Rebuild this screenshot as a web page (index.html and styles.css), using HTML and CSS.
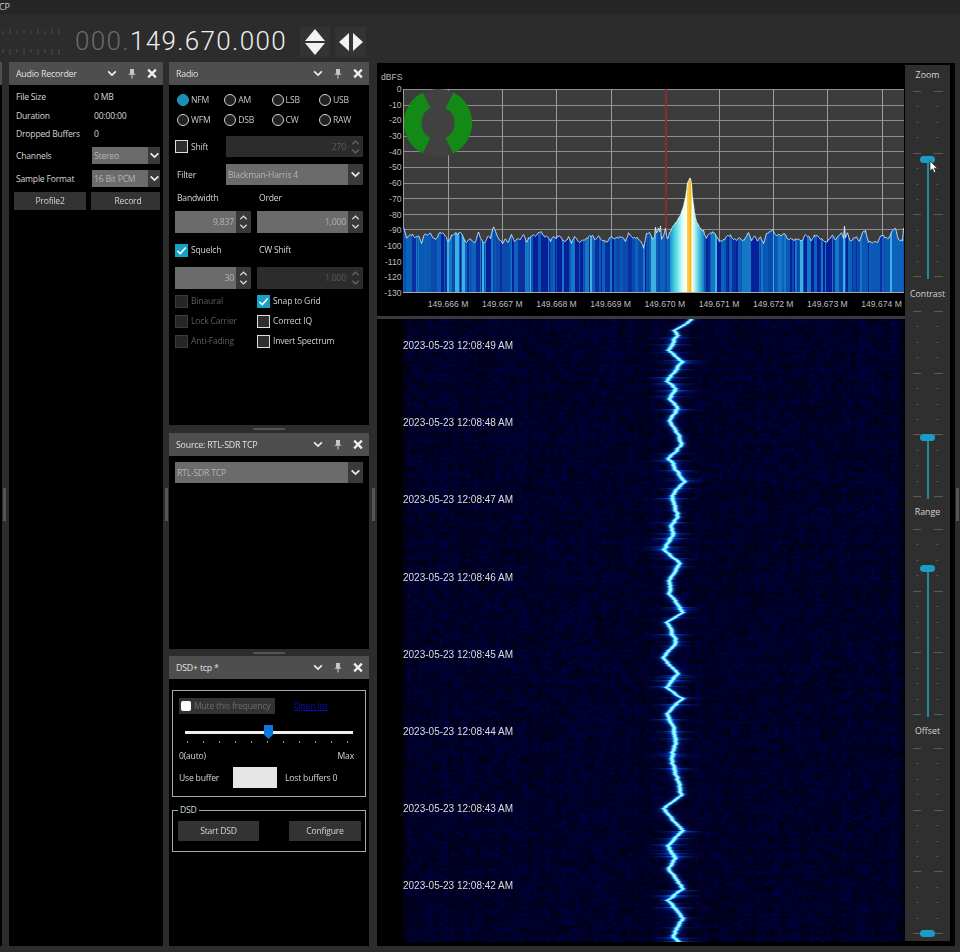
FILE: index.html
```html
<!DOCTYPE html>
<html lang="en">
<head>
<meta charset="utf-8">
<title>SDR</title>
<link rel="stylesheet" href="styles.css">
</head>
<body>
<svg class="defs" width="0" height="0" aria-hidden="true">
  <symbol id="i-chev" viewBox="0 0 10 10"><path d="M1.5 3 L5 6.5 L8.5 3" fill="none" stroke="currentColor" stroke-width="1.5"/></symbol>
  <symbol id="i-pin" viewBox="0 0 10 10"><path d="M3.2 0.8 H6.8 V5.2 H8 V6.2 H5.5 V9.6 H4.5 V6.2 H2 V5.2 H3.2 Z" fill="currentColor" fill-opacity=".75"/></symbol>
  <symbol id="i-x" viewBox="0 0 10 10"><path d="M1.5 1.5 L8.5 8.5 M8.5 1.5 L1.5 8.5" fill="none" stroke="currentColor" stroke-width="2"/></symbol>
  <symbol id="i-up" viewBox="0 0 10 10"><path d="M1.5 7 L5 3.5 L8.5 7" fill="none" stroke="currentColor" stroke-width="1.4"/></symbol>
  <symbol id="i-check" viewBox="0 0 14 14"><path d="M2.5 7.5 L5.7 10.3 L11.5 3.8" fill="none" stroke="#fff" stroke-width="1.7"/></symbol>
</svg>

<div class="app">
  <div class="titlebar">CP</div>
  <div class="toolbar">
    <svg class="meter" width="62" height="30" viewBox="0 0 62 30" aria-hidden="true">
      <path d="M3 3v3M10 1v5M17 3v3M24 1v5M31 3v3M38 1v5M45 3v3M52 1v5M59 1v5M3 21v4M10 21v6M17 21v4M24 21v6M31 21v4M38 21v6M45 21v4M52 21v6M59 21v6" stroke="#4c4c4c" stroke-width="1"/>
    </svg>
    <div class="tuner"><span class="dim">000.</span>149.670.000</div>
    <div class="tunebtn tunebtn-v">
      <svg width="24" height="28" viewBox="0 0 24 28" aria-hidden="true"><path d="M12 1 L22 13 H2 Z M12 27 L2 15 H22 Z" fill="#f2f2f2"/></svg>
    </div>
    <div class="tunebtn tunebtn-h">
      <svg width="28" height="20" viewBox="0 0 28 20" aria-hidden="true"><path d="M12 1 V19 L2 10 Z M16 1 V19 L26 10 Z" fill="#f2f2f2"/></svg>
    </div>
  </div>

  <div class="workspace">
    <div class="gutter gutter-edge"><span class="vhandle"></span></div>

    <section class="panel audio">
      <header class="phead"><span class="ptitle">Audio Recorder</span><span class="picons"><svg><use href="#i-chev"/></svg><svg><use href="#i-pin"/></svg><svg><use href="#i-x"/></svg></span></header>
      <div class="audio-body">
        <div class="arow"><span class="alabel">File Size</span><span class="aval">0 MB</span></div>
        <div class="arow"><span class="alabel">Duration</span><span class="aval">00:00:00</span></div>
        <div class="arow"><span class="alabel">Dropped Buffers</span><span class="aval">0</span></div>
        <div class="arow arow-c1"><span class="alabel">Channels</span><div class="combo combo-sm"><span class="combo-t">Stereo</span><span class="combo-a"><svg><use href="#i-chev"/></svg></span></div></div>
        <div class="arow arow-c2"><span class="alabel">Sample Format</span><div class="combo combo-sm"><span class="combo-t">16 Bit PCM</span><span class="combo-a"><svg><use href="#i-chev"/></svg></span></div></div>
        <div class="abtns"><button class="btn btn-p">Profile2</button><button class="btn btn-r">Record</button></div>
      </div>
    </section>

    <div class="gutter gutter-a"><span class="vhandle"></span></div>

    <div class="stack">
      <section class="panel radio">
        <header class="phead"><span class="ptitle">Radio</span><span class="picons"><svg><use href="#i-chev"/></svg><svg><use href="#i-pin"/></svg><svg><use href="#i-x"/></svg></span></header>
        <div class="radio-body">
          <div class="modes">
            <label class="mode"><i class="rb rb-on"></i>NFM</label>
            <label class="mode"><i class="rb"></i>AM</label>
            <label class="mode"><i class="rb"></i>LSB</label>
            <label class="mode"><i class="rb"></i>USB</label>
            <label class="mode"><i class="rb"></i>WFM</label>
            <label class="mode"><i class="rb"></i>DSB</label>
            <label class="mode"><i class="rb"></i>CW</label>
            <label class="mode"><i class="rb"></i>RAW</label>
          </div>
          <div class="frow frow-shift">
            <label class="chk flabel"><i class="cb cb-off"></i>Shift</label>
            <div class="spin spin-off spin-f"><span class="spin-v">270</span><span class="spin-a"><svg><use href="#i-up"/></svg><svg class="flip"><use href="#i-up"/></svg></span></div>
          </div>
          <div class="frow frow-filter">
            <span class="flabel flabel-t">Filter</span>
            <div class="combo combo-f"><span class="combo-t">Blackman-Harris 4</span><span class="combo-a"><svg><use href="#i-chev"/></svg></span></div>
          </div>
          <div class="two two-l1"><span class="tl">Bandwidth</span><span class="tl">Order</span></div>
          <div class="two two-s1">
            <div class="spin"><span class="spin-v">9,837</span><span class="spin-a"><svg><use href="#i-up"/></svg><svg class="flip"><use href="#i-up"/></svg></span></div>
            <div class="spin"><span class="spin-v">1,000</span><span class="spin-a"><svg><use href="#i-up"/></svg><svg class="flip"><use href="#i-up"/></svg></span></div>
          </div>
          <div class="two two-l2">
            <label class="chk"><i class="cb cb-on"><svg><use href="#i-check"/></svg></i>Squelch</label>
            <span class="tl">CW Shift</span>
          </div>
          <div class="two two-s2">
            <div class="spin"><span class="spin-v">30</span><span class="spin-a"><svg><use href="#i-up"/></svg><svg class="flip"><use href="#i-up"/></svg></span></div>
            <div class="spin spin-off"><span class="spin-v">1,000</span><span class="spin-a"><svg><use href="#i-up"/></svg><svg class="flip"><use href="#i-up"/></svg></span></div>
          </div>
          <div class="two two-c">
            <label class="chk chk-dis"><i class="cb cb-dis"></i>Binaural</label>
            <label class="chk"><i class="cb cb-on"><svg><use href="#i-check"/></svg></i>Snap to Grid</label>
            <label class="chk chk-dis"><i class="cb cb-dis"></i>Lock Carrier</label>
            <label class="chk"><i class="cb cb-off"></i>Correct IQ</label>
            <label class="chk chk-dis"><i class="cb cb-dis"></i>Anti-Fading</label>
            <label class="chk"><i class="cb cb-off"></i>Invert Spectrum</label>
          </div>
        </div>
      </section>
      <div class="hsplit hsplit-a"><span class="hhandle"></span></div>
      <section class="panel source">
        <header class="phead"><span class="ptitle">Source: RTL-SDR TCP</span><span class="picons"><svg><use href="#i-chev"/></svg><svg><use href="#i-pin"/></svg><svg><use href="#i-x"/></svg></span></header>
        <div class="source-body">
          <div class="combo combo-f"><span class="combo-t">RTL-SDR TCP</span><span class="combo-a"><svg><use href="#i-chev"/></svg></span></div>
        </div>
      </section>
      <div class="hsplit hsplit-b"><span class="hhandle"></span></div>
      <section class="panel dsd">
        <header class="phead"><span class="ptitle">DSD+ tcp *</span><span class="picons"><svg><use href="#i-chev"/></svg><svg><use href="#i-pin"/></svg><svg><use href="#i-x"/></svg></span></header>
        <div class="dsd-body">
          <div class="box box-net">
            <div class="mute-row">
              <span class="mute"><i class="mute-cb"></i>Mute this frequency</span>
              <a class="openlist" href="#">Open list</a>
            </div>
            <div class="bufslider"><span class="bufthumb"></span></div>
            <div class="bufticks"></div>
            <div class="buflabels"><span>0(auto)</span><span>Max</span></div>
            <div class="bufrow"><span>Use buffer</span><span class="bufbox"></span><span>Lost buffers 0</span></div>
          </div>
          <div class="box box-dsd">
            <span class="legend">DSD</span>
            <div class="dsdbtns"><button class="btn btn-s">Start DSD</button><button class="btn btn-c">Configure</button></div>
          </div>
        </div>
      </section>
    </div>

    <div class="gutter gutter-b"><span class="vhandle"></span></div>

    <main class="main">
      <div class="display">
        <div class="spectrum">
          <div class="dbfs">dBFS</div>
          <div class="plotrow">
            <div class="dbaxis">
              <span>0</span><span>-10</span><span>-20</span><span>-30</span><span>-40</span><span>-50</span><span>-60</span><span>-70</span><span>-80</span><span>-90</span><span>-100</span><span>-110</span><span>-120</span><span>-130</span>
            </div>
            <div class="plot">
              <canvas id="spec" width="501" height="204"></canvas>
              <svg class="donut" width="70" height="70" viewBox="-35 -35 70 70" aria-hidden="true">
                <circle r="34" fill="#414141"/>
                <path d="M15.4 -30.4 A34 34 0 0 1 15.4 30.4 L7.6 15 A17 17 0 0 0 7.6 -15 Z" fill="#138a15"/>
                <path d="M-15.4 -30.4 A34 34 0 0 0 -15.4 30.4 L-7.6 15 A17 17 0 0 1 -7.6 -15 Z" fill="#138a15"/>
              </svg>
            </div>
          </div>
          <div class="freqaxis">
            <span>149.666 M</span><span>149.667 M</span><span>149.668 M</span><span>149.669 M</span><span>149.670 M</span><span>149.671 M</span><span>149.672 M</span><span>149.673 M</span><span>149.674 M</span>
          </div>
        </div>
        <div class="sep"></div>
        <div class="fallrow">
          <div class="fall">
            <canvas id="fall" width="501" height="623"></canvas>
            <div class="stamps">
              <span>2023-05-23 12:08:49 AM</span>
              <span>2023-05-23 12:08:48 AM</span>
              <span>2023-05-23 12:08:47 AM</span>
              <span>2023-05-23 12:08:46 AM</span>
              <span>2023-05-23 12:08:45 AM</span>
              <span>2023-05-23 12:08:44 AM</span>
              <span>2023-05-23 12:08:43 AM</span>
              <span>2023-05-23 12:08:42 AM</span>
            </div>
          </div>
        </div>
      </div>
      <aside class="sliders">
        <div class="sl sl-first"><div class="sl-label">Zoom</div><div class="ticks"><span class="groove" style="--p:68px"></span><span class="thumb" style="--p:68px"></span>
          <svg class="cursor" width="10" height="14" viewBox="0 0 10 14" aria-hidden="true"><path d="M1 1 V11 L3.4 8.8 L5 12.5 L6.8 11.8 L5.2 8.2 H8.4 Z" fill="#fff" stroke="#222" stroke-width=".7"/></svg>
        </div></div>
        <div class="sl"><div class="sl-label">Contrast</div><div class="ticks"><span class="groove" style="--p:127px"></span><span class="thumb" style="--p:127px"></span></div></div>
        <div class="sl"><div class="sl-label">Range</div><div class="ticks"><span class="groove" style="--p:39px"></span><span class="thumb" style="--p:39px"></span></div></div>
        <div class="sl"><div class="sl-label">Offset</div><div class="ticks"><span class="thumb" style="--p:186px"></span></div></div>
      </aside>
    </main>

    <div class="gutter gutter-c"><span class="vhandle"></span></div>
  </div>
</div>
<script src="script.js"></script>
</body>
</html>
```
FILE: styles.css
```css
* { box-sizing: border-box; }
html, body { margin: 0; padding: 0; height: 100%; }
body {
  background: #2c2c2c;
  color: #d6d6d6;
  font-family: "Open Sans", "Noto Sans", sans-serif;
  font-size: 8.6px;
  letter-spacing: -0.2px;
  overflow: hidden;
}
.defs { position: absolute; }
.app { width: 960px; height: 952px; display: flex; flex-direction: column; filter: blur(0.35px); }

.titlebar { height: 14px; line-height: 14px; background: #262626; font-size: 9px; color: #ccc; margin-left: -1px; }
.toolbar { height: 48px; display: flex; align-items: center; background: #2c2c2c; }
.meter { flex: none; margin-top: 10px; }
.tuner {
  margin-left: 13px; margin-top: 6px; width: 218px; font-family: Roboto, "Open Sans", sans-serif; font-weight: 300;
  font-size: 26px; letter-spacing: 1.35px; color: #eee; white-space: nowrap;
}
.tuner .dim { color: #6a6a6a; }
.tunebtn { background: #333; height: 30px; margin-top: 8px; display: flex; align-items: center; justify-content: center; }
.tunebtn-v { width: 30px; margin-left: 7px; }
.tunebtn-h { width: 31px; margin-left: 5px; }

.workspace { height: 884px; display: flex; }
.gutter { flex: none; display: flex; align-items: center; justify-content: center; }
.gutter-edge {
  width: 9px;
  background-image: linear-gradient(#4e4e4e, #4e4e4e), linear-gradient(#000, #000);
  background-size: 2px 23px, 2px 100%;
  background-repeat: no-repeat;
}
.gutter-a { width: 6px; }
.gutter-b { width: 8px; }
.gutter-c { width: 5px; }
.vhandle { width: 3px; height: 33px; background: #555; }

.panel { background: #000; display: flex; flex-direction: column; }
.phead { height: 23px; flex: none; background: #4e4e4e; display: flex; align-items: center; justify-content: space-between; padding-left: 7px; }
.ptitle { color: #e0e0e0; font-size: 8.8px; }
.picons { display: flex; padding-right: 1px; color: #f0f0f0; }
.picons svg { width: 20px; height: 11px; }

.audio { width: 154px; flex: none; }
.audio-body { padding: 3px 3px 0 7px; }
.arow { display: flex; align-items: center; height: 18.5px; }
.alabel { width: 76px; flex: none; }
.aval { padding-left: 2px; }
.arow-c1 { height: 17px; margin-top: 3.5px; }
.arow-c2 { height: 17px; margin-top: 6px; }
.combo { display: flex; background: #6b6b6b; color: #b4b4b4; align-items: stretch; }
.combo-t { flex: 1; display: flex; align-items: center; padding-left: 2px; }
.combo-a { background: #3a3a3a; display: flex; align-items: center; justify-content: center; flex: none; width: 15px; color: #eee; }
.combo-a svg { width: 11px; height: 11px; }
.combo-sm { flex: 1; height: 17px; }
.combo-sm .combo-a { width: 12px; }
.abtns { display: flex; margin: 5px 0 0 -2px; gap: 5px; }
.btn { background: #333; color: #d4d4d4; border: 0; padding: 0; font: inherit; letter-spacing: inherit; height: 18px; }
.btn-p { width: 72px; }
.btn-r { width: 69px; padding-left: 5px; }

.stack { width: 200px; flex: none; display: flex; flex-direction: column; }
.radio { height: 363px; flex: none; }
.source { height: 216px; flex: none; }
.dsd { height: 290px; flex: none; }
.hsplit { display: flex; justify-content: center; align-items: center; flex: none; }
.hsplit-a { height: 8px; }
.hsplit-b { height: 7px; }
.hhandle { width: 32px; height: 2px; background: #555; }

.radio-body { padding: 5px 6px 0; }
.modes { display: grid; grid-template-columns: repeat(4, 47.3px); margin-left: 2px; }
.mode { display: flex; align-items: center; height: 20px; gap: 2px; color: #c8c8c8; }
.rb { width: 12px; height: 12px; border-radius: 50%; border: 1.6px solid #d0d0d0; background: #222; flex: none; }
.rb-on { background: #1a90b8; border-color: #1f9cc6; }
.frow { display: flex; align-items: center; }
.frow-shift { margin-top: 6px; height: 21px; }
.frow-filter { margin-top: 7px; height: 21px; }
.flabel { width: 51px; flex: none; }
.flabel-t { padding-left: 2px; }
.chk { display: flex; align-items: center; gap: 3px; color: #d0d0d0; white-space: nowrap; }
.cb { width: 13px; height: 13px; flex: none; display: block; }
.cb svg { width: 13px; height: 13px; display: block; }
.cb-off { border: 1.5px solid #ddd; background: #2e2e2e; }
.cb-on { background: #17a0c8; }
.cb-dis { border: 1px solid #3c3c3c; background: #262626; }
.chk-dis { color: #5c5c5c; }
.spin { display: flex; height: 22px; background: #6b6b6b; color: #b4b4b4; }
.spin-f { flex: 1; height: 21px; }
.spin-v { flex: 1; display: flex; align-items: center; justify-content: flex-end; padding-right: 2px; }
.spin-a { width: 15px; flex: none; background: #383838; display: flex; flex-direction: column; align-items: center; justify-content: center; color: #ddd; }
.spin-a svg { width: 11px; height: 9px; }
.flip { transform: scaleY(-1); }
.spin-off { background: #2c2c2c; color: #5a5a5a; }
.spin-off .spin-a { background: #2c2c2c; color: #666; }
.combo-f { flex: 1; height: 21px; }
.two { display: grid; grid-template-columns: 76px 106px; column-gap: 6px; }
.tl { padding-left: 2px; display: flex; align-items: center; }
.two-l1 { margin-top: 6px; height: 14px; }
.two-s1 { margin-top: 6px; }
.two-l2 { margin-top: 10px; height: 14px; }
.two-s2 { margin-top: 10px; }
.two-c { margin-top: 2px; grid-auto-rows: 20px; }

.source-body { padding: 6px 6px 0; display: flex; }

.dsd-body { padding: 11px 3px 0; }
.box { border: 1px solid #a8a8a8; position: relative; }
.box-net { height: 107px; padding: 7px 7px 0 6px; }
.mute-row { display: flex; align-items: center; height: 16px; }
.mute { width: 96px; height: 16px; background: #333; color: #6c6c6c; display: flex; align-items: center; gap: 3px; padding-left: 2px; flex: none; white-space: nowrap; }
.mute-cb { width: 10px; height: 10px; background: #fff; border-radius: 2px; flex: none; }
.openlist { margin-left: 19px; color: #0a0ac0; }
.bufslider { margin: 17px 5px 0 6px; height: 3px; background: #eee; position: relative; }
.bufthumb { position: absolute; left: 79px; top: -6px; width: 9px; height: 14px; background: #0a78dc; clip-path: polygon(0 0, 100% 0, 100% 70%, 50% 100%, 0 70%); }
.bufticks { margin: 7px 0 0 8px; height: 2px; background: repeating-linear-gradient(to right, #999 0 1px, transparent 1px 16px); }
.buflabels { display: flex; justify-content: space-between; margin: 7px 4px 0 0; height: 12px; align-items: center; }
.bufrow { display: flex; align-items: center; margin-top: 5px; height: 21px; }
.bufbox { width: 44px; height: 21px; background: #e6e6e6; margin: 0 8px 0 14px; }
.box-dsd { height: 42px; margin-top: 13px; padding: 10px 4px 0 5px; }
.legend { position: absolute; top: -7px; left: 5px; background: #000; padding: 0 2px; line-height: 12px; }
.dsdbtns { display: flex; justify-content: space-between; }
.btn-s { width: 81px; height: 20px; }
.btn-c { width: 72px; height: 20px; }

.main { width: 578px; flex: none; background: #000; margin-top: 1px; display: flex; padding-right: 5px; }
.display { width: 528px; flex: none; display: flex; flex-direction: column; font-family: "Liberation Sans", sans-serif; letter-spacing: 0; }
.spectrum { height: 253px; flex: none; }
.dbfs { height: 26px; padding: 8px 0 0 4px; font-size: 8.6px; color: #bbb; line-height: 12px; }
.plotrow { display: flex; height: 204px; }
.dbaxis { width: 26px; flex: none; display: flex; flex-direction: column; justify-content: space-between; align-items: flex-end; padding-right: 1.5px; font-size: 8.6px; color: #bdbdbd; }
.dbaxis span { height: 12px; line-height: 12px; margin: -6px 0; }
.plot { position: relative; width: 501px; height: 204px; }
.plot canvas { display: block; }
.donut { position: absolute; left: 0; top: -1px; }
.freqaxis { display: flex; padding: 5px 0 0 44px; font-size: 8.6px; color: #bdbdbd; white-space: nowrap; }
.freqaxis span { width: 54.2px; flex: none; text-align: center; line-height: 12px; }
.sep { height: 3px; flex: none; background: #3a3a3a; }
.fallrow { padding-left: 26px; }
.fall { position: relative; width: 501px; height: 623px; overflow: hidden; }
.fall canvas { display: block; filter: blur(0.7px); }
.stamps { position: absolute; top: 21px; left: 0; display: flex; flex-direction: column; font-size: 10px; color: #dcdcdc; }
.stamps span { height: 77.2px; line-height: 12px; flex: none; }

.sliders { width: 45px; flex: none; margin: 2px 0 5px; padding-top: 1px; background: #2f2f2f; letter-spacing: 0; }
.sl { height: 218.67px; }
.sl-label { height: 18px; line-height: 18px; text-align: center; color: #d4d4d4; font-family: "Open Sans", sans-serif; font-size: 8.8px; margin-bottom: 8px; }
.sl-first .sl-label { margin-bottom: 7px; }
.ticks {
  position: relative; height: 186px;
  background-image:
    repeating-linear-gradient(to bottom, #5c5c5c 0 1px, transparent 1px 61.67px),
    repeating-linear-gradient(to bottom, #5c5c5c 0 1px, transparent 1px 61.67px),
    repeating-linear-gradient(to bottom, #4c4c4c 0 1px, transparent 1px 15.42px),
    repeating-linear-gradient(to bottom, #4c4c4c 0 1px, transparent 1px 15.42px);
  background-size: 8px 100%, 9px 100%, 3px 100%, 3px 100%;
  background-position: 8px 0, 29px 0, 11px 0, 31px 0;
  background-repeat: no-repeat;
}
.groove { position: absolute; left: 22px; width: 2px; top: var(--p); bottom: -2px; background: #1f8aa8; }
.thumb { position: absolute; left: 15px; width: 15px; height: 7px; top: calc(var(--p) - 3.5px); border-radius: 4px; background: #1a9cc4; }
.cursor { position: absolute; left: 24px; top: 69px; }
```
FILE: script.js
```js
function rng(seed) {
  return function () {
    seed |= 0; seed = seed + 0x6D2B79F5 | 0;
    var t = Math.imul(seed ^ seed >>> 15, 1 | seed);
    t = t + Math.imul(t ^ t >>> 7, 61 | t) ^ t;
    return ((t ^ t >>> 14) >>> 0) / 4294967296;
  };
}
function lerpTable(tab, x) {
  if (x <= tab[0][0]) return tab[0].slice(1);
  for (var i = 1; i < tab.length; i++) {
    if (x <= tab[i][0]) {
      var a = tab[i - 1], b = tab[i], f = (x - a[0]) / (b[0] - a[0]), out = [];
      for (var k = 1; k < a.length; k++) out.push(a[k] + (b[k] - a[k]) * f);
      return out;
    }
  }
  return tab[tab.length - 1].slice(1);
}

(function spectrum() {
  var c = document.getElementById('spec'), g = c.getContext('2d'), W = 501, H = 204, X0 = 403;
  var r = rng(7);
  g.fillStyle = '#3c3c3c'; g.fillRect(0, 0, W, H);
  g.fillStyle = '#8e8e8e';
  for (var i = 0; i <= 13; i++) g.fillRect(0, Math.min(H - 1, Math.round(i * 15.6)), W, 1);
  g.fillStyle = '#9c9c9c';
  for (i = 0; i < 9; i++) if (i !== 4) g.fillRect(Math.round(45 + i * 54.2), 0, 1, H);
  g.fillRect(0, 0, 1, H);
  g.fillStyle = '#8c2c2c'; g.fillRect(262, 0, 2, H);

  var knots = [], y = [], x;
  for (i = 0; i < W + 12; i += 3) {
    var v = 143 + r() * 11;
    if (r() < 0.1) v -= 3 + r() * 3;
    if (r() < 0.04) v += 5;
    knots.push(v);
  }
  for (i = 0; i < W; i++) {
    var a = Math.floor(i / 3), f = (i % 3) / 3;
    y.push(knots[a] * (1 - f) + knots[a + 1] * f + (r() - 0.5) * 2);
  }
  var env = [[669, 144], [672, 138], [676, 133], [680, 126], [683, 118], [685, 108], [687, 94], [689, 89], [690, 89], [691, 95], [692, 108], [694, 124], [696, 133], [699, 138], [703, 144]];
  for (var sx = 669; sx <= 703; sx++) {
    y[sx - X0] = lerpTable(env, sx)[0] + (r() - 0.5) * 1.5;
  }
  [[252, 138], [257, 137], [262, 139], [500, 139], [441, 137], [300, 141]].forEach(function (p) { y[p[0]] = p[1]; });

  var pal = ['#06209a', '#0a2fa0', '#0a4aae', '#0a58b4', '#0c62ba', '#1478c6', '#3db2e0'];
  var sig = [[670, 34, 150, 210], [674, 70, 205, 225], [678, 130, 235, 235], [682, 225, 252, 250], [686, 255, 255, 245], [687, 255, 210, 70], [690, 245, 185, 40], [691, 255, 220, 120], [692, 240, 255, 250], [695, 160, 235, 240], [699, 70, 190, 215], [703, 20, 130, 205]];
  x = 0;
  while (x < W) {
    var w = 1 + Math.floor(r() * r() * 8);
    var idx = Math.floor(r() * 6);
    if (r() < 0.08) { idx = 6; w = 1 + Math.floor(r() * 3); }
    g.fillStyle = pal[idx];
    for (var k = 0; k < w && x < W; k++, x++) {
      var scr = x + X0;
      if (scr >= 670 && scr <= 703) {
        var s = lerpTable(sig, scr);
        g.fillStyle = 'rgb(' + s.map(Math.round).join(',') + ')';
      }
      g.fillRect(x, y[x], 1, H - y[x]);
    }
  }
  g.strokeStyle = 'rgba(225,245,250,0.9)'; g.lineWidth = 0.9; g.beginPath();
  for (i = 0; i < W; i++) { if (i) g.lineTo(i + 0.5, y[i]); else g.moveTo(0.5, y[0]); }
  g.stroke();
  g.fillStyle = '#a8a8a8'; g.fillRect(0, H - 1, W, 1);
})();

(function waterfall() {
  var c = document.getElementById('fall'), g = c.getContext('2d'), W = 501, H = 623, X0 = 403, Y0 = 319;
  var r = rng(21);
  var raw = [[690,319],[687,323],[675,330],[677,335],[668,350],[682,361],[667,381],[675,388],[669,398],[677,408],[669,420],[682,443],[669,458],[683,481],[672,495],[677,516],[671,527],[673,533],[664,549],[679,563],[670,580],[670,593],[682,612],[668,622],[676,643],[663,657],[677,673],[666,687],[682,698],[666,713],[673,728],[675,742],[671,758],[681,795],[663,808],[682,830],[666,845],[675,858],[668,868],[683,888],[668,900],[682,918],[672,937],[679,942]];
  var pts = raw.map(function (p) { return [p[1], p[0]]; });
  var col = [], x, y, i;
  for (x = 0; x < W; x++) col.push(0.6 + r() * 0.4);
  var cw = Math.ceil(W / 4) + 1, ch = Math.ceil(H / 3) + 1, cells = [];
  for (i = 0; i < cw * ch; i++) cells.push(0.2 + r() * 0.9);
  var img = g.createImageData(W, H), d = img.data;
  var burst = 0, wob = 0;
  for (y = 0; y < H; y++) {
    wob = wob * 0.75 + (r() - 0.5) * 1.5;
    var tx = lerpTable(pts, y + Y0)[0] + wob - X0;
    burst = burst * 0.5 + (r() < 0.1 ? 0.2 + r() * 0.5 : 0);
    var rowb = 0.85 + r() * 0.3;
    for (x = 0; x < W; x++) {
      var dx = x - tx;
      var core = Math.exp(-(dx * dx) / 5.5);
      var halo = Math.exp(-(dx * dx) / 30) * 0.45 + burst * Math.exp(-(dx * dx) / 220);
      var cell = cells[(Math.floor(y / 3)) * cw + Math.floor(x / 4)];
      var n = 12 + 55 * col[x] * rowb * cell;
      var edge = x < 5 || x > W - 6 ? 0.7 : 1;
      var p = (y * W + x) * 4;
      d[p] = Math.min(255, core * 150);
      d[p + 1] = Math.min(255, core * 250 + halo * 90);
      d[p + 2] = Math.min(255, n * edge + core * 210 + halo * 225);
      d[p + 3] = 255;
    }
  }
  g.putImageData(img, 0, 0);
})();
```
